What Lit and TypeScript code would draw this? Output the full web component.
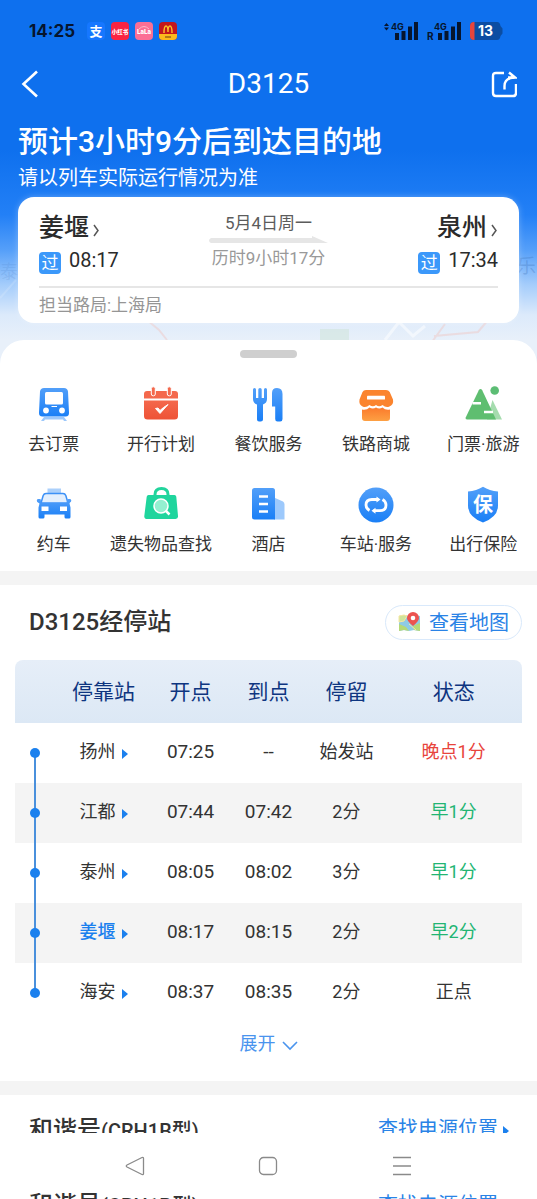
import { LitElement, html, css, svg } from "lit";
import { customElement, property } from "lit/decorators.js";
import { classMap } from "lit/directives/class-map.js";

type Status = "late" | "early" | "ontime";

interface Stop {
  name: string;
  dep: string;
  arr: string;
  stay: string;
  status: string;
  kind: Status;
  current?: boolean;
}

const STOPS: Stop[] = [
  { name: "扬州", dep: "07:25", arr: "--", stay: "始发站", status: "晚点1分", kind: "late" },
  { name: "江都", dep: "07:44", arr: "07:42", stay: "2分", status: "早1分", kind: "early" },
  { name: "泰州", dep: "08:05", arr: "08:02", stay: "3分", status: "早1分", kind: "early" },
  { name: "姜堰", dep: "08:17", arr: "08:15", stay: "2分", status: "早2分", kind: "early", current: true },
  { name: "海安", dep: "08:37", arr: "08:35", stay: "2分", status: "正点", kind: "ontime" },
];

const blue = svg`<linearGradient id="b" x1="0" y1="0" x2="0" y2="1">
  <stop offset="0" stop-color="#529ff9"/><stop offset="1" stop-color="#1a7ff6"/></linearGradient>`;

const ICONS: Record<string, unknown> = {
  ticket: svg`<defs>${blue}</defs>
    <path d="M8 31h20l3 4h-3l-1-1.500H9L8 35H5z" fill="#9cc8fb"/>
    <path d="M8 2h20q3.500 0 4 3.500l1 21q.3 4-3.500 4h-23q-3.800 0-3.500-4l1-21Q4.500 2 8 2z" fill="url(#b)"/>
    <rect x="9" y="6" width="18" height="12.500" rx="1.500" fill="#fff"/>
    <circle cx="10" cy="24.500" r="2.900" fill="#fff"/><circle cx="26" cy="24.500" r="2.900" fill="#fff"/>
    <path d="M15.500 20.500h5.500" stroke="#fff" stroke-width="1"/>`,
  plan: svg`<defs><linearGradient id="r" x1="0" y1="0" x2="0" y2="1">
      <stop offset="0" stop-color="#f4684c"/><stop offset="1" stop-color="#ee5236"/></linearGradient></defs>
    <path d="M4 5h28q3 0 3 3v4.500H1V8q0-3 3-3z" fill="#f4684c"/>
    <path d="M1 14.500h34V30q0 3.500-3.500 3.500h-27Q1 33.500 1 30z" fill="url(#r)"/>
    <rect x="8.300" y=".8" width="4" height="9" rx="1.800" fill="#f4684c" stroke="#fff" stroke-width="1"/>
    <rect x="24.300" y=".8" width="4" height="9" rx="1.800" fill="#f4684c" stroke="#fff" stroke-width="1"/>
    <path d="M12.500 22.500l4.500 5 8-9q-5 3-8 6l-2-2.500z" fill="#fff" stroke="#fff" stroke-width="1"/>`,
  meal: svg`<defs>${blue}</defs>
    <path d="M4.500 2q1.500 0 1.500 1.500V12h2.300V3.500Q8.300 2 10 2t1.700 1.500V12H14V3.500Q14 2 15.500 2T17 3.500V13q0 4-4 5.500v15q0 2-2.200 2H9q-2 0-2-2v-15q-4-1.500-4-5.500V3.500Q3 2 4.500 2z" fill="url(#b)"/>
    <path d="M22 20.500V7q0-5 5-5 5.500 0 5.500 6v25q0 2.500-2.300 2.500h-2.700q-2.300 0-2.300-2.500V20.500z" fill="url(#b)"/>`,
  mall: svg`<defs><linearGradient id="o" x1="0" y1="0" x2="0" y2="1">
      <stop offset="0" stop-color="#fb7a2c"/><stop offset="1" stop-color="#fda043"/></linearGradient></defs>
    <path d="M8 4h20q2.500 0 3.700 2l3.300 7.500q1 5.500-4 7.200-3.500 1-6.500-1.700-3.300 2.700-6.500 0-3.200 2.700-6.500 0-3 2.700-6.500 1.700-4.500-1.700-3.500-7.200L4.500 6Q5.500 4 8 4z" fill="#fb842e"/>
    <path d="M4 23.500q4.500 1 7.500-2 3.300 2 6.500 0 3.300 2 6.500 0 3 3 7.500 2V32q0 3-3 3H7q-3 0-3-3z" fill="url(#o)"/>
    <rect x="9" y="9.800" width="18" height="3.800" rx=".7" fill="#fff"/>`,
  travel: svg`<path d="M27.500 14L37 33.500H22z" fill="#a5dcae"/>
    <path d="M15.500 3q1 0 1.700 1.300L31 33.500H2q-2 0-1.300-2L13.800 4.300Q14.500 3 15.500 3z" fill="#5fbe70"/>
    <path d="M7.500 17.300h8.500M19 26h9" stroke="#fff" stroke-width="2.600"/>
    <circle cx="29.700" cy="4.500" r="4.300" fill="#5cbd74"/>`,
  taxi: svg`<defs>${blue}</defs>
    <rect x="11.500" y="2.500" width="13.500" height="5" fill="#abd0fb"/>
    <path d="M10 7.500h17q2 0 2.800 2L32 17H5l2.200-7.500q.8-2 2.800-2z" fill="#e3effd" stroke="#3c91f7" stroke-width="1.500"/>
    <path d="M2 13h2.500l1 4h25l1-4H34q1.300 0 1.300 1.500T34 16.500l-.5 1 1 4V31q0 1.500-1.500 1.500h-3q-1.500 0-1.500-1.500v-2.500h-20V31q0 1.500-1.500 1.500H4Q2.500 32.500 2.500 31v-9.500l1-4-1.500-1Q.8 16 .8 14.500T2 13z" fill="url(#b)"/>
    <rect x="5.500" y="20.500" width="7" height="4.500" fill="#fff"/><rect x="24" y="20.500" width="7" height="4.500" fill="#fff"/>`,
  lost: svg`<path d="M12 12V8.500q0-6 6.500-6t6.500 6V12" fill="none" stroke="#21d49c" stroke-width="3"/>
    <path d="M5.500 9h26q1.500 0 1.800 1.700L35 30q.3 3-2.500 3h-28Q1 33 1.300 30L3.700 10.700Q4 9 5.500 9z" fill="#1fd59d"/>
    <circle cx="18" cy="20" r="7" fill="#94f0d0" stroke="#fff" stroke-width="1.500"/>
    <path d="M22.500 24.500l4 4" stroke="#fff" stroke-width="2.500"/>`,
  hotel: svg`<defs>${blue}</defs><path d="M24 11.500l9 4q1.500 1 1.500 3v15H24z" fill="#9dc9fc"/>
    <path d="M4.500 2h18q2.500 0 2.500 2.500v29H4.500Q2 33.500 2 31V4.500Q2 2 4.500 2z" fill="url(#b)"/>
    <path d="M9 10.500h9M9 18h9M9 25.500h9" stroke="#fff" stroke-width="2.600"/>`,
  station: svg`<defs>${blue}</defs><circle cx="18" cy="19" r="17.500" fill="url(#b)"/>
    <path d="M20.500 13.500H14q-6 0-6 5.500 0 3.500 3.500 5.500M15.500 24.700H22q6 0 6-5.700 0-3.500-3.500-5.500" fill="none" stroke="#fff" stroke-width="2.800"/>
    <path d="M18.500 10.500l4 3-4 3zM17.500 21.700l-4 3 4 3z" fill="#fff"/>`,
  insure: svg`<defs>${blue}</defs>
    <path d="M18 .8q6.500 4.200 15 4.700v14Q33 31 18 36.500 3 31 3 19.500v-14Q11.500 5 18 .8z" fill="url(#b)"/>
    <text x="18" y="25.500" text-anchor="middle" font-size="20" font-weight="700" fill="#fff">保</text>`,
};

const SERVICES: [string, string][] = [
  ["ticket", "去订票"],
  ["plan", "开行计划"],
  ["meal", "餐饮服务"],
  ["mall", "铁路商城"],
  ["travel", "门票·旅游"],
  ["taxi", "约车"],
  ["lost", "遗失物品查找"],
  ["hotel", "酒店"],
  ["station", "车站·服务"],
  ["insure", "出行保险"],
];

@customElement("status-bar")
class StatusBar extends LitElement {
  static styles = css`
    :host { display: flex; align-items: center; justify-content: space-between; height: 62px; padding: 0 34px 0 29px; color: #06152e; }
    .left, .right { display: flex; align-items: center; }
    .clock { font: 700 17px/24px Inter, sans-serif; margin-right: 12px; }
    .apps { display: flex; gap: 6px; }
    .right { gap: 9px; }
    svg { display: block; }
  `;
  private signal(second: boolean) {
    const font = "Inter, sans-serif";
    return html`<svg width="34" height="20" viewBox="0 0 34 20" fill="#06152e">
      ${second
        ? svg`<text x="0" y="19" font-size="10" font-weight="700" font-family=${font}>R</text>`
        : svg`<path d="M0 5l2.500-3L5 5zM0 6.500h5l-2.500 3z"/>`}
      <text x="7" y="8.500" font-size="9" font-weight="700" font-family=${font}>4G</text>
      <path d="M11 12h4v7h-4zM17.500 10h4v9h-4zM24 5.500h4V19h-4zM30 1h4v18h-4z"/>
    </svg>`;
  }
  render() {
    return html`
      <div class="left">
        <span class="clock">14:25</span>
        <div class="apps">
          <svg width="18" height="18"><rect width="18" height="18" rx="4" fill="#1677ff"/><text x="9" y="14" text-anchor="middle" font-size="13" font-weight="700" fill="#fff">支</text></svg>
          <svg width="18" height="18"><rect width="18" height="18" rx="4" fill="#fb2442"/><text x="9" y="11.500" text-anchor="middle" font-size="5.500" font-weight="900" fill="#fff">小红书</text></svg>
          <svg width="18" height="18"><rect width="18" height="18" rx="4" fill="#fb6f95"/><path d="M4 7q5-5 10 0" fill="none" stroke="#ffb9cc"/><text x="9" y="12" text-anchor="middle" font-size="6.500" font-weight="900" fill="#fff">LaLa</text></svg>
          <svg width="18" height="18"><rect width="18" height="18" rx="4" fill="#c3161c"/><path d="M0 12h18v2q0 4-4 4H4q-4 0-4-4z" fill="#fbb91c"/><path d="M5 11Q5 4 7 4t2 6q0-6 2-6t2 7" fill="none" stroke="#fcc226" stroke-width="1.400"/><path d="M6 15h6" stroke="#6b3b10"/></svg>
        </div>
      </div>
      <div class="right">
        ${this.signal(false)} ${this.signal(true)}
        <svg width="33" height="18"><path d="M4 0h23q3 0 3.500 4l2 2.500v5l-2 2.500q-.5 4-3.500 4H4q-4 0-4-4V4q0-4 4-4z" fill="#0b4da2"/>
          <path d="M4.500 0v18H4q-4 0-4-4V4q0-4 4-4z" fill="#e6453c"/>
          <text x="15.500" y="14" text-anchor="middle" font-size="14" font-weight="700" font-family="Inter, sans-serif" fill="#fff">13</text></svg>
      </div>`;
  }
}

@customElement("trip-header")
class TripHeader extends LitElement {
  static styles = css`
    :host { display: block; position: relative; padding-bottom: 41px; background: linear-gradient(#0e70ee 0, #0e70ee 150px, #2380f6 215px, #559ff9 250px, #a5cdfb 285px, #dceafb 315px, #e8f0fa 340px); }
    .map { position: absolute; left: 0; bottom: 0; width: 100%; height: 130px; }
    .front { position: relative; color: #fff; }
    .nav { display: grid; grid-template-columns: 60px 1fr 60px; align-items: center; height: 44px; }
    .title { margin: 0; font-size: 28px; line-height: 36px; font-weight: 400; text-align: center; }
    button { border: 0; background: none; padding: 0; font: inherit; color: inherit; display: flex; cursor: pointer; }
    .back { padding-left: 20px; }
    .share { justify-self: end; padding-right: 20px; }
    .eta { margin: 17px 18px 0; font-size: 30px; line-height: 38px; font-weight: 500; }
    .note { margin: 5px 18px 7px; font-size: 20px; line-height: 24px; }
    .card { margin: 0 18px; padding: 13px 21px 5px; border-radius: 16px; background: #fff; color: #2b2b2b; box-shadow: 0 0 6px rgba(255, 255, 255, 0.3); }
    .route { display: flex; justify-content: space-between; height: 76px; }
    .end { display: flex; flex-direction: column; }
    .end.to { align-items: flex-end; }
    .name { font-size: 25px; line-height: 36px; font-weight: 500; align-items: center; gap: 3px; }
    .name svg { margin-top: 4px; }
    .time { display: flex; align-items: center; gap: 8px; font-size: 20px; line-height: 26px; }
    .badge { width: 22px; height: 22px; margin-top: 6px; border-radius: 4px; background: #3b98fa; color: #fff; font-size: 17px; line-height: 22px; text-align: center; }
    .mid { display: flex; flex-direction: column; align-items: center; font-size: 17px; line-height: 24px; color: #5c5c5c; padding-top: 1px; }
    .line { display: block; margin: 1px 0 3px; }
    .span { color: #999; }
    .bureau { border-top: 2px solid #e6e6e6; margin: 0; padding-top: 4px; font-size: 17px; line-height: 26px; color: #959595; }
  `;
  render() {
    return html`
      <svg class="map" viewBox="0 0 537 130" preserveAspectRatio="none" fill="none">
        <path d="M147 86l12 10 8 10M445 90l-16 22M488 86l-10 12-44 4" stroke="#eccfce" stroke-opacity=".6" stroke-width="2"/>
        <path d="M320 95h29v35h-29z" fill="#d0e4dc" fill-opacity=".6"/>
        <path d="M385 106l14-18 14 14 12-10" stroke="#fff" stroke-opacity=".5" stroke-width="3"/>
        <path d="M0 64l16-18" stroke="#fff" stroke-opacity=".15" stroke-width="2"/>
        <text x="517" y="39" font-size="19" fill="#3a6fb5" fill-opacity=".3">乐清</text>
        <text x="0" y="44" font-size="18" fill="#3a6fb5" fill-opacity=".15">泰</text>
      </svg>
      <div class="front">
        <status-bar></status-bar>
        <div class="nav">
          <button class="back" aria-label="返回"><svg width="22" height="28" fill="none" stroke="#fff" stroke-width="2.600"><path d="M17 1.500L3.500 14 17 26.500"/></svg></button>
          <h1 class="title">D3125</h1>
          <button class="share" aria-label="分享"><svg width="26" height="28" fill="none" stroke="#fff" stroke-width="2.400"><path d="M13 3H5Q2 3 2 6v17q0 3 3 3h17q3 0 3-3v-9"/><path d="M13.500 19.500V16q0-8 10-8.500"/><path d="M18 2.500l6 5h-7"/></svg></button>
        </div>
        <p class="eta">预计3小时9分后到达目的地</p>
        <p class="note">请以列车实际运行情况为准</p>
        <section class="card">
          <div class="route">
            <div class="end">
              <button class="name">姜堰<svg width="8" height="14" fill="none" stroke="#555" stroke-width="1.500"><path d="M2 2l4 5.500L2 13"/></svg></button>
              <div class="time"><span class="badge">过</span>08:17</div>
            </div>
            <div class="mid">
              <span>5月4日周一</span>
              <svg class="line" width="119" height="7"><path d="M2 2h101V0l16 7H2Q0 6 0 4.500T2 2z" fill="#e6e6e6"/></svg>
              <span class="span">历时9小时17分</span>
            </div>
            <div class="end to">
              <button class="name">泉州<svg width="8" height="14" fill="none" stroke="#555" stroke-width="1.500"><path d="M2 2l4 5.500L2 13"/></svg></button>
              <div class="time"><span class="badge">过</span>17:34</div>
            </div>
          </div>
          <p class="bureau">担当路局:上海局</p>
        </section>
      </div>`;
  }
}

@customElement("service-grid")
class ServiceGrid extends LitElement {
  static styles = css`
    :host { display: grid; grid-template-columns: repeat(5, 1fr); row-gap: 29px; padding: 28px 0 14px; }
    .item { border: 0; background: none; padding: 0; color: #333; font: inherit; font-size: 17px; line-height: 26px; display: flex; flex-direction: column; align-items: center; gap: 7px; white-space: nowrap; cursor: pointer; }
    svg { display: block; overflow: visible; }
  `;
  render() {
    return SERVICES.map(
      ([icon, label]) => html`<button class="item">
        <svg width="36" height="38" viewBox="0 0 36 38">${ICONS[icon]}</svg>${label}
      </button>`,
    );
  }
}

@customElement("stop-table")
class StopTable extends LitElement {
  static styles = css`
    :host { display: block; padding: 20px 15px 24px; }
    .head { display: flex; align-items: center; justify-content: space-between; margin-bottom: 20px; }
    h2 { margin: 0 0 0 14px; font-size: 24px; line-height: 35px; font-weight: 500; color: #333; }
    button { font: inherit; cursor: pointer; background: none; }
    .map { display: flex; align-items: center; gap: 8px; box-sizing: border-box; height: 35px; padding: 0 12px; border: 1px solid #d9e9fb; border-radius: 18px; color: #2a83e6; font-size: 20px; line-height: 26px; }
    table { width: 100%; table-layout: fixed; border-collapse: separate; border-spacing: 0; text-align: center; color: #333; }
    th, td { padding: 0; }
    th { height: 63px; font-size: 21px; line-height: 30px; font-weight: 400; color: #0e3580; background: linear-gradient(#e6eef8, #dce8f5); }
    th:first-child { border-radius: 8px 0 0 0; }
    th:last-child { border-radius: 0 8px 0 0; }
    td { height: 60px; font-size: 18px; line-height: 26px; box-sizing: border-box; padding-bottom: 2px; }
    tr:nth-child(even) td { background-color: #f4f4f4; }
    .c0 { width: 8%; } .c1 { width: 19%; } .c2 { width: 15.400%; } .c5 { width: 27%; }
    .clock { font-size: 19px; }
    .rail { padding: 0; background: linear-gradient(#4a90dc, #4a90dc) center / 2px 100% no-repeat; }
    tr:first-child .rail { background-position: bottom; background-size: 2px 50%; }
    tr:last-child .rail { background-position: top; background-size: 2px 50%; }
    .dot { display: block; width: 10px; height: 10px; margin: 0 auto; border-radius: 50%; background: #1b80ee; }
    .station { display: inline-flex; align-items: center; gap: 6px; color: inherit; text-decoration: none; }
    .current { color: #1b80ee; font-weight: 500; }
    .late { color: #e8443c; }
    .early { color: #22b573; }
    .more { display: flex; align-items: center; gap: 6px; margin: 8px auto 0; padding: 0; border: 0; color: #4a94ee; font-size: 18px; line-height: 26px; }
    svg { display: block; }
    .arrow, .chev { margin-top: 3px; }
  `;
  render() {
    return html`
      <div class="head">
        <h2>D3125经停站</h2>
        <button class="map">
          <svg width="23" height="22"><path d="M1 4l5-1 5 1 5-1 6 1v15l-6-1-5 1-5-1-5 1z" fill="#8ecbe6"/><path d="M1 12l7 3 3 4-5-1-5 1zM15 14l7-3v8l-6-1z" fill="#b6d977"/><path d="M1 4l5-1 3 1-3 5-5 1zM11 12l7 6" fill="#cfe49c" stroke="#f6e7a0"/><path d="M15 14Q9 9 9 6a6 6 0 0112 0q0 3-6 8z" fill="#ec5350"/><circle cx="15" cy="6" r="2.300" fill="#fff"/></svg>查看地图
        </button>
      </div>
      <table>
        <colgroup><col class="c0" /><col class="c1" /><col class="c2" /><col class="c2" /><col class="c2" /><col class="c5" /></colgroup>
        <thead>
          <tr><th></th><th>停靠站</th><th>开点</th><th>到点</th><th>停留</th><th>状态</th></tr>
        </thead>
        <tbody>
          ${STOPS.map(
            (s) => html`<tr>
              <td class="rail"><span class="dot"></span></td>
              <td>
                <a href="#" class=${classMap({ station: true, current: !!s.current })}>${s.name}<svg class="arrow" width="6" height="10"><path d="M0 0l6 5-6 5z" fill="#1b80ee"/></svg></a>
              </td>
              <td class="clock">${s.dep}</td>
              <td class="clock">${s.arr}</td>
              <td>${s.stay}</td>
              <td class=${s.kind}>${s.status}</td>
            </tr>`,
          )}
        </tbody>
      </table>
      <button class="more">展开<svg class="chev" width="16" height="10" fill="none" stroke="#4a94ee" stroke-width="1.600"><path d="M1 1l7 7 7-7"/></svg></button>`;
  }
}

@customElement("train-set")
class TrainSet extends LitElement {
  @property({ type: Boolean, reflect: true }) tail = false;
  static styles = css`
    :host { display: flex; justify-content: space-between; align-items: flex-start; padding: 18px 28px 0 29px; height: 38px; box-sizing: border-box; overflow: hidden; background: #fff; }
    :host([tail]) { padding-top: 0; height: auto; flex: 1; min-height: 0; }
    h2 { margin: 0; font-size: 24px; line-height: 34px; font-weight: 500; color: #333; }
    .model { font-size: 20px; }
    a { display: flex; align-items: center; gap: 5px; font-size: 20px; line-height: 32px; color: #2a83e6; text-decoration: none; }
    :host([tail]) h2, :host([tail]) a { line-height: 24px; }
    svg { margin-top: 3px; }
  `;
  render() {
    return html`
      <h2>和谐号<span class="model">(CRH1B型)</span></h2>
      <a href="#">查找电源位置<svg width="6" height="10"><path d="M0 0l6 5-6 5z" fill="#1b80ee"/></svg></a>`;
  }
}

@customElement("app-root")
class AppRoot extends LitElement {
  static styles = css`
    :host { display: flex; flex-direction: column; height: 100vh; overflow: hidden; background: #fff; font-family: Roboto, "Noto Sans CJK SC", sans-serif; color: #333; }
    :host > * { flex-shrink: 0; }
    .sheet { position: relative; margin-top: -24px; padding-top: 10px; border-radius: 24px 24px 0 0; background: #fff; }
    .handle { width: 57px; height: 8px; margin: 0 auto; border-radius: 4px; background: #cfcfcf; }
    .band { height: 14px; background: #f4f4f4; }
    .keys { display: grid; grid-template-columns: repeat(3, 1fr); justify-items: center; align-items: center; height: 60px; padding: 6px 68px 0; box-sizing: border-box; background: #fff; }
    .key { border: 0; padding: 0; background: none; display: flex; }
  `;
  render() {
    return html`
      <trip-header></trip-header>
      <main class="sheet">
        <div class="handle"></div>
        <service-grid></service-grid>
        <div class="band"></div>
        <stop-table></stop-table>
        <div class="band"></div>
        <train-set></train-set>
      </main>
      <nav class="keys">
        <button class="key" aria-label="后退"><svg width="20" height="20" fill="none" stroke="#8a8a8a" stroke-width="1.300"><path d="M17 1.500q1.500-.5 1.500 1v15q0 1.500-1.500 1L2 11q-1.500-1 0-2z"/></svg></button>
        <button class="key" aria-label="主屏幕"><svg width="20" height="20" fill="none" stroke="#8a8a8a" stroke-width="1.300"><rect x="1.500" y="1.500" width="17" height="17" rx="4"/></svg></button>
        <button class="key" aria-label="菜单"><svg width="20" height="20" fill="none" stroke="#8a8a8a" stroke-width="1.300"><path d="M1 1.500h18M1 10h18M1 18.500h18"/></svg></button>
      </nav>
      <train-set tail></train-set>`;
  }
}
